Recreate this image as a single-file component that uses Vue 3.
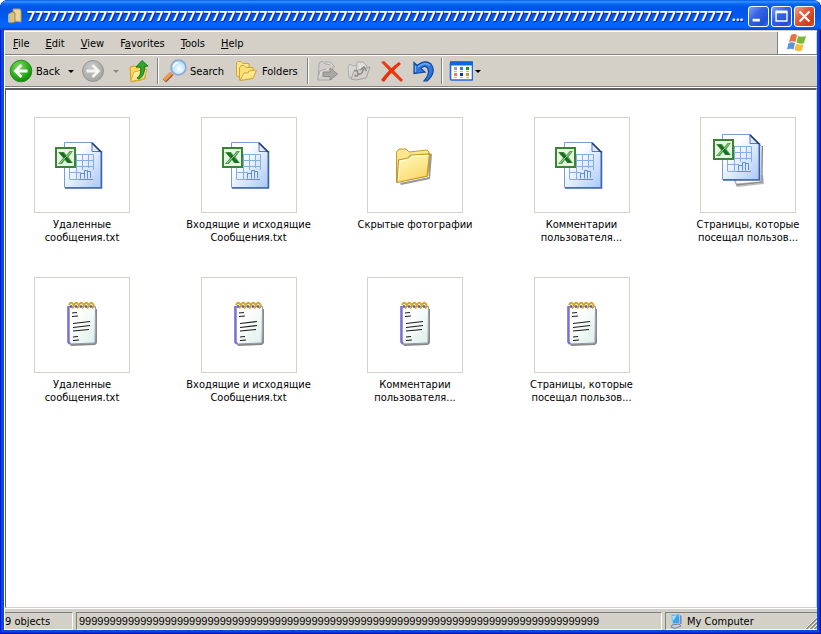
<script setup>
const title = '7'.repeat(88) + '...'
const details = '9'.repeat(85)

const menus = [
  { before: '', key: 'F', after: 'ile' },
  { before: '', key: 'E', after: 'dit' },
  { before: '', key: 'V', after: 'iew' },
  { before: 'F', key: 'a', after: 'vorites' },
  { before: '', key: 'T', after: 'ools' },
  { before: '', key: 'H', after: 'elp' },
]

const art = {
  excel: { w: 56, h: 48 },
  stack: { w: 72, h: 64 },
  folder: { w: 40, h: 40 },
  notes: { w: 32, h: 48 },
}

const files = [
  { icon: 'excel', lines: ['Удаленные', 'сообщения.txt'] },
  { icon: 'excel', lines: ['Входящие и исходящие', 'Сообщения.txt'] },
  { icon: 'folder', lines: ['Скрытые фотографии'] },
  { icon: 'excel', lines: ['Комментарии', 'пользователя...'] },
  { icon: 'stack', lines: ['Страницы, которые', 'посещал пользов...'] },
  { icon: 'notes', lines: ['Удаленные', 'сообщения.txt'] },
  { icon: 'notes', lines: ['Входящие и исходящие', 'Сообщения.txt'] },
  { icon: 'notes', lines: ['Комментарии', 'пользователя...'] },
  { icon: 'notes', lines: ['Страницы, которые', 'посещал пользов...'] },
]
</script>

<template>
  <div class="window">
    <svg class="sprite" width="0" height="0" aria-hidden="true">
      <defs>
        <linearGradient id="paper" x1="0" y1="0" x2="1" y2="1">
          <stop offset="0.3" stop-color="#fff" />
          <stop offset="1" stop-color="#a9c8f8" />
        </linearGradient>
        <linearGradient id="gold" x1="0" y1="0" x2="0.6" y2="1">
          <stop offset="0" stop-color="#fffbc0" />
          <stop offset="1" stop-color="#fbd86a" />
        </linearGradient>
        <linearGradient id="note" x1="0" y1="0" x2="1" y2="1">
          <stop offset="0.3" stop-color="#fff" />
          <stop offset="1" stop-color="#dcefe9" />
        </linearGradient>
        <radialGradient id="green" cx="0.4" cy="0.3" r="0.75">
          <stop offset="0" stop-color="#7ddc62" />
          <stop offset="0.6" stop-color="#2fae1e" />
          <stop offset="1" stop-color="#128008" />
        </radialGradient>
        <radialGradient id="grey" cx="0.4" cy="0.3" r="0.75">
          <stop offset="0" stop-color="#c8c8c6" />
          <stop offset="1" stop-color="#a2a2a0" />
        </radialGradient>
        <radialGradient id="lens" cx="0.55" cy="0.6" r="0.6">
          <stop offset="0" stop-color="#fff" />
          <stop offset="1" stop-color="#9bdcf8" />
        </radialGradient>
      </defs>
      <symbol id="excel" viewBox="0 0 56 48">
        <path d="M10.500 1.500H38L47 10.500V46.500H10.500Z" fill="url(#paper)" stroke="#7d9bd6" />
        <path d="M47.500 10V47H11" fill="none" stroke="#3a62ae" stroke-width="1.500" />
        <path d="M38 1.500V10.500H47Z" fill="#dfeafc" stroke="#5878bc" />
        <path d="M38 2L47 11" stroke="#20396e" stroke-width="1.500" />
        <path d="M15.500 38.500V13.500H39.500V29M16 19.500H39M16 25.500H39M16 31.500H27M16 38.500H25M22.500 14V38M28.500 14V29M34.500 14V27" fill="none" stroke="#86aee6" />
        <path d="M26.500 37.500V32.500H30.500V37M30.500 37.500V29.500H33.500V37M33.500 37.500V30.500H36.500V37M25 38.500H39" fill="#dbe8fb" stroke="#5d8fd6" />
        <rect x="2" y="7" width="19" height="19" fill="#eaf4e4" stroke="#3a8533" stroke-width="2" />
        <path d="M4 11H10L12.500 14L15.500 10H19L14.500 16L19 22H13L11 19L8 23H4L9 17Z" fill="#4da64a" />
        <path d="M5 11.500H9L18 22H14Z" fill="#1d6b23" />
        <path d="M17 11L6 22" stroke="#8cc887" />
      </symbol>
      <symbol id="stack" viewBox="0 0 72 64">
        <path d="M21 46L51 42L52 51L25 54Z" fill="#777" opacity="0.5" />
        <path d="M20 8H44L50 14L49 49L24 51Z" fill="#fff" stroke="#aab0b8" />
        <path d="M50.500 13L50 49L24 52" fill="none" stroke="#858585" />
        <use href="#excel" width="56" height="48" />
      </symbol>
      <symbol id="folder" viewBox="0 0 40 40">
        <path d="M5 38L34 32V8L37 9L35 34L6 40Z" fill="#555" opacity="0.6" />
        <path d="M1.500 37V7L4 4H11L14 7L32 5L34 7L33 31Z" fill="#fbe68c" stroke="#c39c2c" />
        <path d="M2 37.500L3.500 15L13 13L16 10L34.500 9L32 31Z" fill="url(#gold)" stroke="#c39c2c" stroke-width="1.200" />
        <path d="M3.500 35L5 16L14 14.500L17 11.500L33 10.500" fill="none" stroke="#fffce0" />
      </symbol>
      <symbol id="notes" viewBox="0 0 32 48">
        <path d="M4 43L29 42L30 8H31V42L29 44L5 45Z" fill="#555" opacity="0.7" />
        <path d="M2 5.500H29.500L29 42L4 43L2 41Z" fill="url(#note)" stroke="#8d98b5" />
        <path d="M2.500 5V41L4 43" fill="none" stroke="#7a70d0" stroke-width="2.400" />
        <path d="M4 5.500H29" stroke="#6658a8" stroke-width="2.500" stroke-dasharray="2 3" />
        <path d="M3 4q2-4 4-1t-1 4M8 4q2-4 4-1t-1 4M13 4q2-4 4-1t-1 4M18 4q2-4 4-1t-1 4M23 4q2-4 4-1t-1 4" fill="none" stroke="#d0a52a" stroke-width="2" />
        <path d="M6 12L11 11.500M6 15.500L12 15M7 22.500L24 20.500M7 26.500L24 24.500M7 30L23 28.500M7 36L12 35.500M7 39.500L13 39" stroke="#1c1c1c" stroke-width="1.200" />
      </symbol>
    </svg>

    <header class="titlebar">
      <svg class="title-icon" viewBox="0 0 16 16" width="16" height="16" aria-hidden="true">
        <path d="M6 1L13 1L14 3V14L7 13Z" fill="#ead69a" stroke="#b89e58" />
        <path d="M1.500 6L5 4L8 5V14L4 15L1.500 13Z" fill="#d9c184" stroke="#a58c4a" />
        <path d="M1 7V14L3 15V8Z" fill="#a9b7c8" />
      </svg>
      <h1 class="title">{{ title }}</h1>
      <div class="captions">
        <button class="caption" type="button" aria-label="Minimize">
          <svg viewBox="0 0 21 21" width="19" height="19"><path d="M4 14.500H12" stroke="#fff" stroke-width="3" /></svg>
        </button>
        <button class="caption" type="button" aria-label="Maximize">
          <svg viewBox="0 0 21 21" width="19" height="19"><path d="M4.500 5V15.500H16.500V5" fill="none" stroke="#fff" stroke-width="1.500" /><path d="M4 5.500H17" stroke="#fff" stroke-width="3" /></svg>
        </button>
        <button class="caption close" type="button" aria-label="Close">
          <svg viewBox="0 0 21 21" width="19" height="19"><path d="M5 5L16 16M16 5L5 16" stroke="#fff" stroke-width="2.400" /></svg>
        </button>
      </div>
    </header>

    <div class="body">
      <div class="menurow">
        <nav class="menu">
          <button v-for="m in menus" :key="m.key" type="button">{{ m.before }}<u>{{ m.key }}</u>{{ m.after }}</button>
        </nav>
        <div class="flag">
          <svg viewBox="0 0 22 20" width="22" height="20" aria-hidden="true">
            <path d="M5 2Q8 0 11 2L9.500 9Q6.500 7.500 3 9Z" fill="#e8713c" />
            <path d="M12 3Q15 4.500 20 3L18 10Q14 11.500 10.500 9.500Z" fill="#7cb832" />
            <path d="M2.500 10Q6 8.500 9 10L7.500 16.500Q4.500 15 1 16.500Z" fill="#5a93dc" />
            <path d="M10 10.500Q14 12.500 17.500 11L16 17.500Q12 19 8.500 17Z" fill="#f4bd3c" />
          </svg>
        </div>
      </div>

      <div class="toolbar">
        <button class="tool" type="button">
          <svg viewBox="0 0 24 24" width="24" height="24" aria-hidden="true">
            <circle cx="12" cy="12" r="10.800" fill="url(#green)" stroke="#2b8e22" />
            <path d="M18.500 12H7M12.500 6L6.500 12L12.500 18" fill="none" stroke="#fff" stroke-width="3" />
          </svg>
          <span>Back</span>
        </button>
        <button class="drop" type="button" aria-label="Back history"><i class="caret"></i></button>
        <button class="tool slim" type="button" aria-label="Forward" disabled>
          <svg viewBox="0 0 24 24" width="24" height="24" aria-hidden="true">
            <circle cx="12" cy="12" r="10.500" fill="url(#grey)" stroke="#969694" />
            <path d="M5.500 12H17M11.500 6L17.500 12L11.500 18" fill="none" stroke="#f4f4f2" stroke-width="2.800" />
          </svg>
        </button>
        <button class="drop" type="button" aria-label="Forward history" disabled><i class="caret"></i></button>
        <button class="tool icon" type="button" aria-label="Up">
          <svg viewBox="0 0 24 24" width="24" height="24" aria-hidden="true">
            <path d="M3 8L8 7L10 9L18 7V20L4 23Z" fill="#f8d95e" stroke="#d0a020" />
            <path d="M3.500 22.500L7 13L20 10L17 20Z" fill="url(#gold)" stroke="#d8ac30" />
            <path d="M10 19Q14.500 17 13.500 8H9L15 1.500L21 7L17.500 7.500Q18 17 12 20Z" fill="#32a52c" stroke="#1b7f20" />
          </svg>
        </button>
        <span class="sep"></span>
        <button class="tool wide" type="button">
          <svg viewBox="0 0 24 24" width="24" height="24" aria-hidden="true">
            <path d="M1.500 22L9 14.500" stroke="#9b5a40" stroke-width="4.500" />
            <path d="M1.500 21L8.500 14" stroke="#f39a45" stroke-width="3" />
            <circle cx="15.500" cy="8.500" r="7.400" fill="url(#lens)" stroke="#8fa9d6" stroke-width="1.800" />
            <path d="M10.500 8Q11 4 15 3.500" fill="none" stroke="#fff" stroke-width="1.500" />
          </svg>
          <span>Search</span>
        </button>
        <button class="tool wide" type="button">
          <svg viewBox="0 0 24 24" width="24" height="24" aria-hidden="true">
            <path d="M1.500 17V4L3 2.500H6L8 4.500H14V9L8 18Z" fill="#fbe68a" stroke="#d0a430" />
            <path d="M4.500 21V9L6 6.500H9L11 8.500H18V11L15 20Z" fill="#fbe07a" stroke="#d0a430" />
            <path d="M5 21.500L9 14L13 14L14 12L21.500 11L18 19.500Z" fill="url(#gold)" stroke="#d0a430" />
          </svg>
          <span>Folders</span>
        </button>
        <span class="sep"></span>
        <button class="tool icon" type="button" aria-label="Move To" disabled>
          <svg viewBox="0 0 24 24" width="24" height="24" aria-hidden="true">
            <path d="M3 21L4 4L7 2L10 5L18 6V12L16 21Z" fill="#d0cfcb" stroke="#a9a8a4" />
            <path d="M2.500 20.500L5 12L11 10M10 3H15L20 8" fill="#dddcd8" stroke="#aaa9a5" />
            <path d="M8 13H15V9L22.500 15L15 21V17.500H8Z" fill="#aaa9a6" stroke="#8c8b87" />
          </svg>
        </button>
        <button class="tool icon" type="button" aria-label="Copy To" disabled>
          <svg viewBox="0 0 24 24" width="24" height="24" aria-hidden="true">
            <path d="M1 8L3 5L6 7L11 6V19H2Z" fill="#d8d7d3" stroke="#b0afab" />
            <path d="M10 3H16L20 7V17H9Z" fill="#e0dfdb" stroke="#aaa9a5" />
            <path d="M4 20L7 12L23 8L19 19L9 21Z" fill="#d1d0cc" stroke="#a3a29e" />
            <path d="M7 11.500Q11 11 10.500 14Q14 18 16.500 10M13.500 11L17 8L19.500 12M7.500 16.500Q11 18 11 15" fill="none" stroke="#8c8b87" stroke-width="1.500" />
          </svg>
        </button>
        <button class="tool icon" type="button" aria-label="Delete">
          <svg viewBox="0 0 24 24" width="24" height="24" aria-hidden="true">
            <path d="M2 3L5 2Q14 10 24 21L22 23Q12 14 2 3Z" fill="#ea3a10" />
            <path d="M20 3L22 5Q12 13 5 23L2 21Q10 10 20 3Z" fill="#e83208" />
          </svg>
        </button>
        <button class="tool icon" type="button" aria-label="Undo">
          <svg viewBox="0 0 24 24" width="24" height="24" aria-hidden="true">
            <path d="M3 3.500L6 6.500Q14 0 20 5Q26 13 16 22L13 22Q20 14 16 8.500Q13 6 10 9.500L14 13L3 14.500Z" fill="#2f77dc" stroke="#124aa0" stroke-width="1.200" />
            <path d="M4.500 7V13M7 8Q14 2 19 6.500" fill="none" stroke="#74b2f5" stroke-width="1.200" />
          </svg>
        </button>
        <span class="sep"></span>
        <button class="tool views" type="button" aria-label="Views">
          <svg viewBox="0 0 24 24" width="24" height="24" aria-hidden="true">
            <rect x="1.500" y="3" width="22" height="18" rx="1" fill="#fff" stroke="#1c6adb" stroke-width="1.600" />
            <rect x="1" y="2.500" width="23" height="4" fill="#1464dc" />
            <path d="M5 8h3v3h-3z" fill="#a296c8" /><path d="M11 8h3v3h-3z" fill="#2b7be0" /><path d="M17 8h3v3h-3z" fill="#129a1c" />
            <path d="M5 14h3v3h-3z" fill="#f47a4c" /><path d="M11 14h3v3h-3z" fill="#0c3596" /><path d="M17 14h3v3h-3z" fill="#c99c08" />
            <path d="M5 12.500h3M11 12.500h3M17 12.500h3M5 18.500h3M11 18.500h3M17 18.500h3" stroke="#b4b4bc" />
          </svg>
          <i class="caret"></i>
        </button>
      </div>

      <main class="view">
        <ul class="files">
          <li v-for="(f, i) in files" :key="i" class="file">
            <div class="thumb">
              <svg :width="art[f.icon].w" :height="art[f.icon].h" aria-hidden="true"><use :href="'#' + f.icon" :width="art[f.icon].w" :height="art[f.icon].h" /></svg>
            </div>
            <div class="name"><span v-for="l in f.lines" :key="l">{{ l }}</span></div>
          </li>
        </ul>
      </main>

      <footer class="status">
        <div class="cell count">9 objects</div>
        <div class="cell info">{{ details }}</div>
        <div class="cell zone">
          <svg viewBox="0 0 16 16" width="16" height="16" aria-hidden="true">
            <path d="M3 2L11 1L12 10L5 11Z" fill="#38a5ef" stroke="#a6c4e6" />
            <path d="M4 3L9 2L5 8Z" fill="#a4e0ff" />
            <path d="M12 2L13.500 3V11L12 11Z" fill="#7489b8" />
            <path d="M4 12L11 11L13 13L7 15.500L3 14Z" fill="#c9cde0" stroke="#787fa5" />
          </svg>
          <span>My Computer</span>
          <svg class="grip" viewBox="0 0 12 12" width="12" height="12" aria-hidden="true">
            <path d="M0 12L12 0M4 12L12 4M8 12L12 8" stroke="#fff" />
            <path d="M1.500 12L12 1.500M5.500 12L12 5.500M9.500 12L12 9.500" stroke="#85837b" stroke-width="1.500" />
          </svg>
        </div>
      </footer>
    </div>
  </div>
</template>

<style>
body {
  margin: 0;
  background: #fff;
}
</style>

<style scoped>
.window {
  box-sizing: border-box;
  min-height: 100vh;
  display: flex;
  flex-direction: column;
  padding: 0 4px 4px;
  border-radius: 8px 8px 0 0;
  background: #0a46e0;
  box-shadow: inset 1px 0 #0019cf, inset -1px -1px #00138c, inset -2px -2px #0831d9;
  font: 11px/13px "DejaVu Sans Condensed", "Liberation Sans", sans-serif;
  color: #000;
  overflow: hidden;
}
.sprite {
  position: absolute;
}
button {
  margin: 0;
  padding: 0;
  border: 0;
  background: none;
  font: inherit;
  color: inherit;
}
.titlebar {
  display: flex;
  align-items: center;
  height: 30px;
  margin: 0 -4px;
  padding: 2px 6px 0 7px;
  box-sizing: border-box;
  border-radius: 8px 8px 0 0;
  background: linear-gradient(#0058e6 0, #3a93ff 6%, #0a6cf5 12%, #0055e5 24%, #0058ee 55%, #0066ff 80%, #0064fb 90%, #0043cf 100%);
}
.title-icon {
  flex: none;
}
.title {
  flex: 1;
  min-width: 0;
  margin: 0 0 0 4px;
  overflow: hidden;
  white-space: nowrap;
  font: bold 14px/20px "Noto Sans", "Open Sans", sans-serif;
  color: #fff;
  text-shadow: 1px 1px #0a1883;
}
.captions {
  display: flex;
  gap: 2px;
  flex: none;
}
.caption {
  display: flex;
  width: 21px;
  height: 21px;
  box-sizing: border-box;
  border: 1px solid #fff;
  border-radius: 3px;
  background: linear-gradient(135deg, #7f9ff2, #3463e6 40%, #1f4fd8 80%, #3a72f0);
}
.caption.close {
  background: linear-gradient(135deg, #f2a58c, #e2593a 40%, #cf3d18 80%, #d9502a);
}
.body {
  flex: 1;
  display: flex;
  flex-direction: column;
  padding: 1px 0 0 1px;
  background: #d4d0c8;
  border-top: 1px solid #d4d0c8;
  box-shadow: inset 1px 1px #fff;
}
.menurow {
  display: flex;
  height: 22px;
  border-bottom: 1px solid #808080;
  box-shadow: 0 1px #fff;
}
.menu {
  flex: 1;
  display: flex;
}
.menu button {
  padding: 0 8px;
}
.flag {
  display: flex;
  align-items: center;
  justify-content: center;
  width: 38px;
  margin-right: 1px;
  background: #fff;
  border-left: 1px solid #808080;
}
.toolbar {
  display: flex;
  align-items: center;
  gap: 4px;
  height: 30px;
  padding: 1px 4px 0;
  border-bottom: 1px solid #808080;
  box-shadow: 0 1px #fff;
}
.tool {
  display: flex;
  align-items: center;
  justify-content: flex-start;
  gap: 3px;
  flex: none;
  width: 52px;
  height: 24px;
}
.tool.slim {
  width: 26px;
  justify-content: center;
}
.tool.icon {
  width: 28px;
  justify-content: center;
}
.tool.wide {
  width: 68px;
}
.tool.views {
  width: 36px;
  gap: 2px;
  justify-content: center;
}
.drop {
  display: flex;
  align-items: center;
  justify-content: center;
  flex: none;
  width: 11px;
  height: 24px;
}
.caret {
  border: 3px solid transparent;
  border-top-color: #000;
  border-bottom: 0;
}
.drop:disabled .caret {
  border-top-color: #8a8882;
}
.sep {
  flex: none;
  width: 1px;
  height: 26px;
  background: #808080;
  border-right: 1px solid #fff;
}
.view {
  flex: 1;
  margin-top: 1px;
  border: 1px solid #404040;
  border-width: 2px 1px 1px;
  border-color: #606060 #d4d0c8 #d4d0c8 #606060;
  background: #fff;
}
.files {
  display: grid;
  grid-template-columns: repeat(auto-fill, 126px);
  justify-content: space-between;
  column-gap: 40px;
  grid-auto-rows: 160px;
  margin: 0;
  padding: 27px 5px 0 13px;
  list-style: none;
}
.file {
  display: flex;
  flex-direction: column;
  align-items: center;
  gap: 5px;
}
.thumb {
  box-sizing: border-box;
  display: flex;
  align-items: center;
  justify-content: center;
  width: 96px;
  height: 96px;
  border: 1px solid #d4d0c8;
}
.name {
  display: flex;
  flex-direction: column;
  align-items: center;
  white-space: nowrap;
}
.status {
  display: flex;
  gap: 3px;
  padding-top: 3px;
  border-top: 1px solid #fff;
}
.cell {
  box-sizing: border-box;
  display: flex;
  align-items: center;
  height: 18px;
  padding-left: 2px;
  border: 1px solid;
  border-color: #808080 #fff #fff #808080;
  white-space: nowrap;
  overflow: hidden;
}
.count {
  width: 68px;
  padding-left: 0;
  border-left: 0;
}
.info {
  flex: 1;
  min-width: 0;
  font-family: "Liberation Sans", sans-serif;
}
.zone {
  width: 152px;
  gap: 3px;
  border-right: 0;
}
.grip {
  margin-left: auto;
  align-self: flex-end;
}
</style>
